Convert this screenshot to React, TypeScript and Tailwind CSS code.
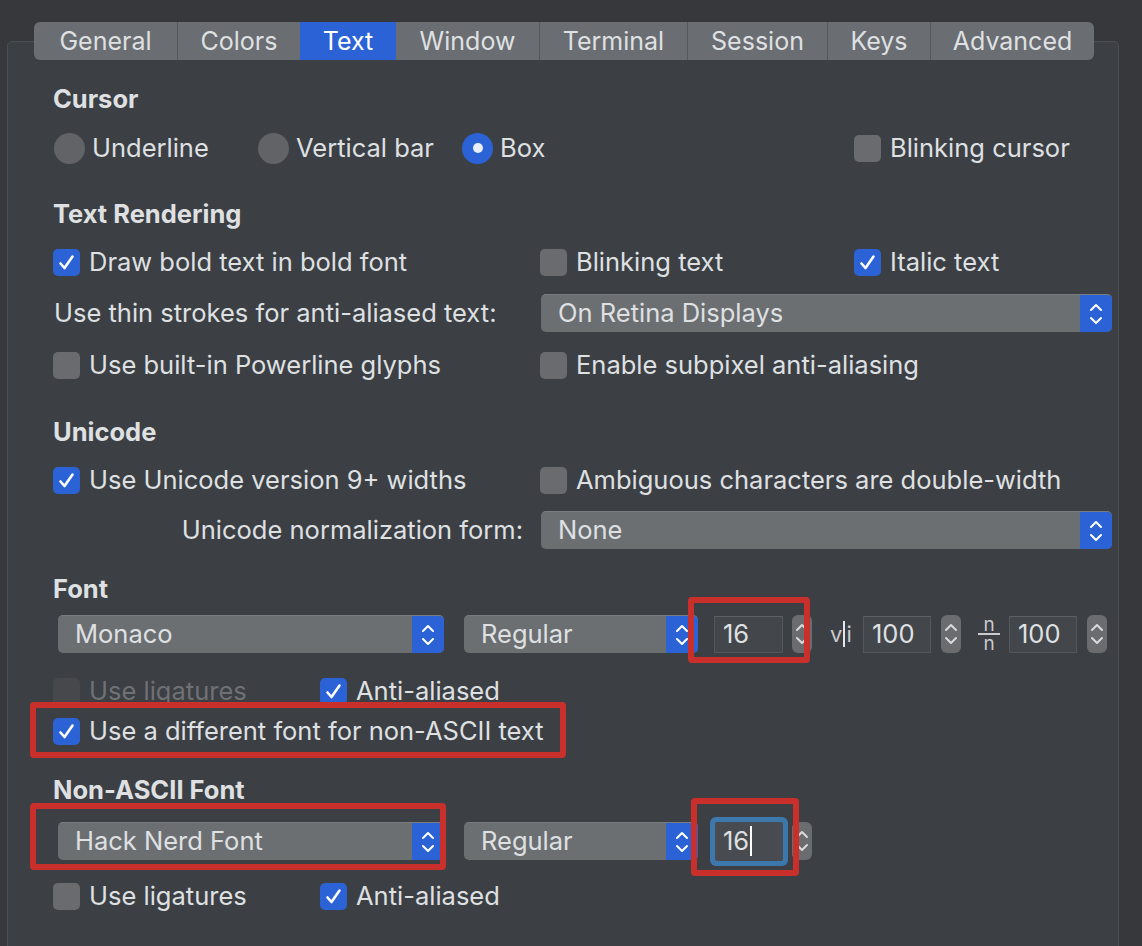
import React from 'react';
import clsx from 'clsx';

const Check = ({ checked = false, disabled = false }: { checked?: boolean; disabled?: boolean }) => (
  <span
    className={clsx(
      'w-[27px] h-[27px] rounded-[5px] flex items-center justify-center shrink-0',
      checked ? 'bg-[#2b63d6]' : disabled ? 'bg-[#46484c]' : 'bg-[#696b6f]'
    )}
  >
    {checked && (
      <svg width="27" height="27" viewBox="0 0 27 27">
        <path d="M7.5 14.5 L11.5 19 L19.5 7.5" stroke="#ffffff" strokeWidth="2.6" fill="none" strokeLinecap="round" strokeLinejoin="round" />
      </svg>
    )}
  </span>
);

const CheckItem = ({ label, checked, disabled, className }: { label: string; checked?: boolean; disabled?: boolean; className?: string }) => (
  <div className={clsx('flex items-center gap-[9px] shrink-0', className)}>
    <Check checked={checked} disabled={disabled} />
    <span className={disabled ? 'text-[#6f7175]' : ''}>{label}</span>
  </div>
);

const Radio = ({ label, selected, className }: { label: string; selected?: boolean; className?: string }) => (
  <div className={clsx('flex items-center gap-[7px] shrink-0', className)}>
    <span
      className={clsx(
        'w-[31px] h-[31px] rounded-full flex items-center justify-center',
        selected ? 'bg-[#2b63d6]' : 'bg-[#616367]'
      )}
    >
      {selected && <span className="w-[10px] h-[10px] rounded-full bg-[#e9eefb]" />}
    </span>
    <span>{label}</span>
  </div>
);

const Arrows = ({ color }: { color: string }) => (
  <svg width="20" height="38" viewBox="0 0 20 38">
    <path d="M5 15 L10 10 L15 15" stroke={color} strokeWidth="2" fill="none" strokeLinecap="round" strokeLinejoin="round" />
    <path d="M5 23 L10 28 L15 23" stroke={color} strokeWidth="2" fill="none" strokeLinecap="round" strokeLinejoin="round" />
  </svg>
);

const Popup = ({ value, className }: { value: string; className: string }) => (
  <div className={clsx('h-[38px] rounded-[5px] bg-[#6c6f72] flex items-stretch shrink-0 overflow-hidden border-t border-[#7a7d80]', className)}>
    <span className="flex-1 pl-[17px] leading-[36px] whitespace-nowrap">{value}</span>
    <span className="w-[32px] bg-[#2b63d6] flex items-center justify-center">
      <Arrows color="#ffffff" />
    </span>
  </div>
);

const Stepper = () => (
  <div className="w-[20px] h-[38px] rounded-[6px] bg-[#6a6c70] flex items-center justify-center shrink-0">
    <Arrows color="#d9d9db" />
  </div>
);

const NumField = ({ value, className }: { value: string; className: string }) => (
  <div className={clsx('h-[37px] bg-[#43464a] border border-[#54575b] border-t-[#5d6064] flex items-center pl-[8px] shrink-0', className)}>
    {value}
  </div>
);

const Row = ({ children, className }: { children: React.ReactNode; className?: string }) => (
  <div className={clsx('h-[40px] flex items-center', className)}>{children}</div>
);

const tabs = [
  { name: 'General', w: 'w-[143px]' },
  { name: 'Colors', w: 'w-[123px]' },
  { name: 'Text', w: 'w-[96px]', active: true },
  { name: 'Window', w: 'w-[143px]' },
  { name: 'Terminal', w: 'w-[148px]' },
  { name: 'Session', w: 'w-[140px]' },
  { name: 'Keys', w: 'w-[103px]' },
  { name: 'Advanced', w: 'w-[164px]' },
];

export default function App() {
  return (
    <div className="w-[1142px] h-[946px] bg-[#36383c] relative overflow-hidden font-['Inter',sans-serif] text-[25.5px] text-[#dfe0e2] leading-none">
      <div className="mt-[41px] ml-[7px] w-[1112px] h-[920px] border border-[#4c4f54] rounded-[5px] bg-[#3c3f44]">
        {/* tab bar */}
        <div className="-mt-[20px] ml-[26px] flex h-[38px] w-[1060px] rounded-[6px] bg-[#6a6d71] overflow-hidden text-[25px]">
          {tabs.map((t, i) => (
            <div
              key={t.name}
              className={clsx(
                'flex items-center justify-center h-full',
                t.w,
                t.active ? 'bg-[#2b63d6] text-white' : '',
                i > 0 && !t.active && !tabs[i - 1].active ? 'border-l border-[#55585c]' : ''
              )}
            >
              {t.name}
            </div>
          ))}
        </div>

        <div className="pt-[19px] pl-[45px]">
          <Row className="font-bold">Cursor</Row>
          <Row className="mt-[9px]">
            <Radio label="Underline" className="w-[204px] ml-[1px]" />
            <Radio label="Vertical bar" className="w-[204px]" />
            <Radio label="Box" selected className="w-[392px]" />
            <CheckItem label="Blinking cursor" />
          </Row>

          <Row className="mt-[26px] font-bold">Text Rendering</Row>
          <Row className="mt-[8px]">
            <CheckItem label="Draw bold text in bold font" checked className="w-[487px]" />
            <CheckItem label="Blinking text" className="w-[314px]" />
            <CheckItem label="Italic text" checked />
          </Row>
          <Row className="mt-[11px]">
            <span className="w-[488px] pl-[1px]">Use thin strokes for anti-aliased text:</span>
            <Popup value="On Retina Displays" className="w-[571px]" />
          </Row>
          <Row className="mt-[12px]">
            <CheckItem label="Use built-in Powerline glyphs" className="w-[487px]" />
            <CheckItem label="Enable subpixel anti-aliasing" />
          </Row>

          <Row className="mt-[27px] font-bold">Unicode</Row>
          <Row className="mt-[8px]">
            <CheckItem label="Use Unicode version 9+ widths" checked className="w-[487px]" />
            <CheckItem label="Ambiguous characters are double-width" />
          </Row>
          <Row className="mt-[10px]">
            <span className="w-[488px] pr-[18px] text-right">Unicode normalization form:</span>
            <Popup value="None" className="w-[571px]" />
          </Row>

          <Row className="mt-[19px] font-bold">Font</Row>
          <Row className="mt-[5px]">
            <Popup value="Monaco" className="w-[386px] ml-[5px]" />
            <Popup value="Regular" className="w-[234px] ml-[20px]" />
            <NumField value="16" className="w-[69px] ml-[16px]" />
            <div className="ml-[9px]"><Stepper /></div>
            <div className="ml-[18px] w-[23px] flex items-center text-[#c9cacc] text-[22px]">
              v<span className="w-[2px] h-[26px] bg-[#e6e6e6] mx-[1px]" />i
            </div>
            <NumField value="100" className="w-[68px] ml-[10px]" />
            <div className="ml-[10px]"><Stepper /></div>
            <div className="ml-[17px] w-[22px] flex flex-col items-center text-[#c9cacc] text-[19px] leading-[17px]">
              <span>n</span>
              <span className="w-[22px] h-[2px] bg-[#c9cacc]" />
              <span>n</span>
            </div>
            <NumField value="100" className="w-[68px] ml-[9px]" />
            <div className="ml-[10px]"><Stepper /></div>
          </Row>
          <Row className="mt-[17px]">
            <CheckItem label="Use ligatures" disabled className="w-[267px]" />
            <CheckItem label="Anti-aliased" checked />
          </Row>
          <Row>
            <CheckItem label="Use a different font for non-ASCII text" checked />
          </Row>

          <Row className="mt-[19px] font-bold">Non-ASCII Font</Row>
          <Row className="mt-[11px]">
            <Popup value="Hack Nerd Font" className="w-[386px] ml-[5px]" />
            <Popup value="Regular" className="w-[234px] ml-[20px]" />
            <div className="ml-[17px] w-[68px] h-[39px] rounded-[2px] ring-[5px] ring-[#3d78ad] bg-[#484b4f] flex items-center pl-[8px] shrink-0">
              16<span className="w-[2px] h-[30px] bg-white ml-[1px]" />
            </div>
            <div className="ml-[9px]"><Stepper /></div>
          </Row>
          <Row className="mt-[15px]">
            <CheckItem label="Use ligatures" className="w-[267px]" />
            <CheckItem label="Anti-aliased" checked />
          </Row>
        </div>
      </div>

      {/* red annotation boxes */}
      <div className="absolute left-[688px] top-[597px] w-[122px] h-[66px] border-[6px] border-[#c9302b] rounded-[4px]" />
      <div className="absolute left-[30px] top-[702px] w-[536px] h-[56px] border-[6px] border-[#c9302b] rounded-[4px]" />
      <div className="absolute left-[30px] top-[803px] w-[416px] h-[67px] border-[6px] border-[#c9302b] rounded-[4px]" />
      <div className="absolute left-[691px] top-[798px] w-[108px] h-[78px] border-[6px] border-[#c9302b] rounded-[4px]" />
    </div>
  );
}
